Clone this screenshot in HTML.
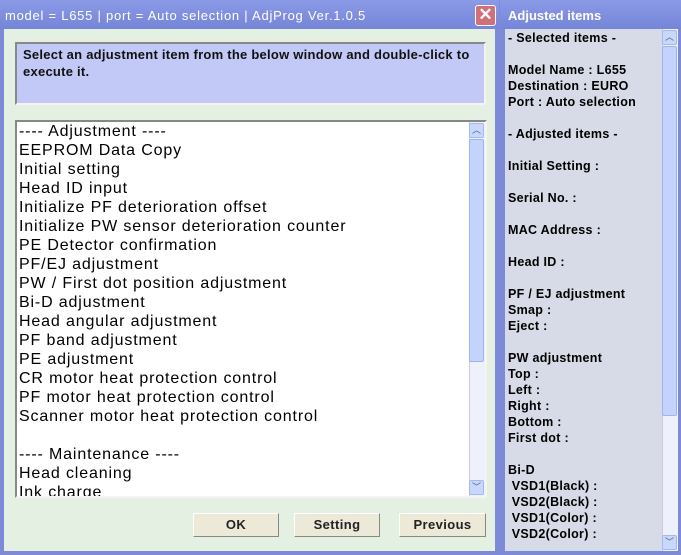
<!DOCTYPE html>
<html><head><style>
*{margin:0;padding:0;box-sizing:border-box}
body{width:681px;height:555px;overflow:hidden;background:#7d8ad8;font-family:"Liberation Sans",Arial,sans-serif;position:relative}
.abs{position:absolute}
.title{left:0;top:0;width:499px;height:29px;background:linear-gradient(#8b9ae6,#7585d8);color:#fff;font-size:13px;line-height:31px;padding-left:5px;white-space:pre;letter-spacing:0.75px}
.close{left:475px;top:5px;width:21px;height:21px;background:#d0707a;border:1px solid #fff;border-radius:3px;color:#fff;font-size:17px;line-height:18px;text-align:center;font-weight:bold}
.body{left:4px;top:29px;width:491px;height:522px;background:#e4f0e2}
.msg{left:15px;top:42px;width:471px;height:63px;background:#c2c9f7;border:2px solid;border-color:#888 #f4f4f4 #f4f4f4 #888;font-size:13px;font-weight:bold;padding:2px 6px;line-height:17px;color:#111;letter-spacing:0.25px}
.list{left:15px;top:120px;width:472px;height:378px;background:#fff;border:2px solid;border-color:#888 #f4f4f4 #f4f4f4 #888;overflow:hidden}
.list div.t{position:absolute;left:2px;top:0;font-size:16px;line-height:19px;color:#000;letter-spacing:0.85px;white-space:nowrap}
.sb{background:#eef0fb;border-left:1px solid #ccd}
.thumb{background:#c3d3fb;border:1px solid #9fb3ee;border-radius:2px}
.arr{width:15px;height:15px;background:#c8d7fc;border:1px solid #a7b8ee;border-radius:2px;font-size:9px;color:#4d6185;text-align:center;line-height:13px}
.btn{top:513px;height:24px;background:#ece9d8;border:1px solid;border-color:#fff #888 #888 #fff;font-size:13px;font-weight:bold;text-align:center;line-height:22px;color:#222;letter-spacing:0.4px}
.rtitle{left:500px;top:0;width:181px;height:29px;background:linear-gradient(#8b9ae6,#7585d8);color:#fff;font-size:13px;font-weight:bold;line-height:32px;padding-left:8px}
.rp{left:505px;top:29px;width:157px;height:522px;background:#d7dbe7;font-size:12.5px;font-weight:bold;line-height:16px;padding:1px 3px;color:#000;white-space:pre;letter-spacing:0.3px}
</style></head><body>
<div class="abs title">model = L655 | port = Auto selection | AdjProg Ver.1.0.5</div>
<div class="abs close">✕</div>
<div class="abs body"></div>
<div class="abs msg">Select an adjustment item from the below window and double-click to execute it.</div>
<div class="abs list">
<div class="t">---- Adjustment ----<br>EEPROM Data Copy<br>Initial setting<br>Head ID input<br>Initialize PF deterioration offset<br>Initialize PW sensor deterioration counter<br>PE Detector confirmation<br>PF/EJ adjustment<br>PW / First dot position adjustment<br>Bi-D adjustment<br>Head angular adjustment<br>PF band adjustment<br>PE adjustment<br>CR motor heat protection control<br>PF motor heat protection control<br>Scanner motor heat protection control<br><br>---- Maintenance ----<br>Head cleaning<br>Ink charge</div>
<div class="abs sb" style="left:452px;top:0;width:16px;height:374px"></div>
<div class="abs arr" style="left:452px;top:1px">︿</div>
<div class="abs thumb" style="left:452px;top:17px;width:15px;height:223px"></div>
<div class="abs arr" style="left:452px;top:358px">﹀</div>
</div>
<div class="abs btn" style="left:193px;width:86px">OK</div>
<div class="abs btn" style="left:294px;width:86px">Setting</div>
<div class="abs btn" style="left:399px;width:87px">Previous</div>
<div class="abs rtitle">Adjusted items</div>
<div class="abs rp">- Selected items -

Model Name : L655
Destination : EURO
Port : Auto selection

- Adjusted items -

Initial Setting :

Serial No. :

MAC Address :

Head ID :

PF / EJ adjustment
Smap :
Eject :

PW adjustment
Top :
Left :
Right :
Bottom :
First dot :

Bi-D
 VSD1(Black) :
 VSD2(Black) :
 VSD1(Color) :
 VSD2(Color) :</div>
<div class="abs sb" style="left:662px;top:29px;width:16px;height:522px"></div>
<div class="abs arr" style="left:662px;top:30px">︿</div>
<div class="abs thumb" style="left:662px;top:46px;width:15px;height:370px"></div>
<div class="abs arr" style="left:662px;top:535px">﹀</div>
</body></html>
